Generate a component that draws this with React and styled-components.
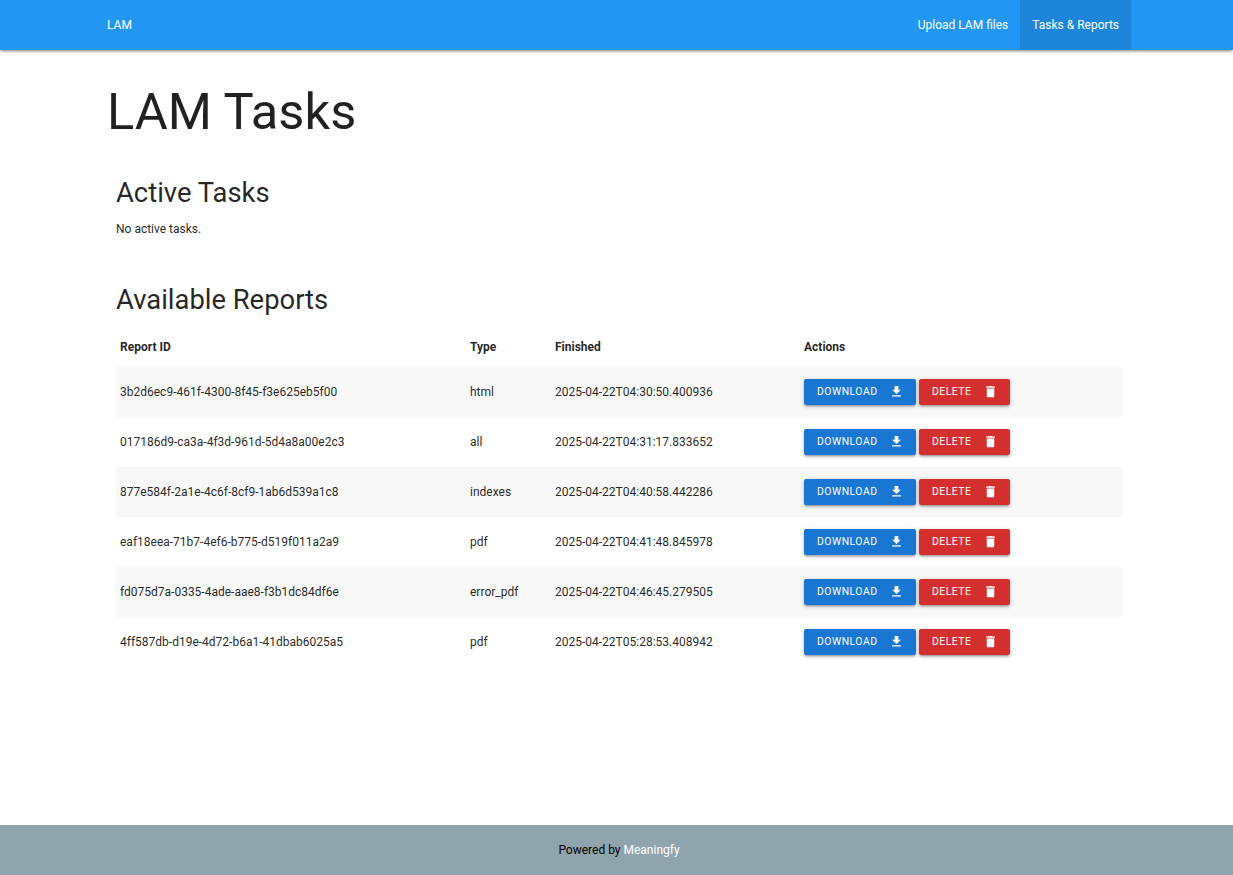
import React from 'react'
import styled, { createGlobalStyle } from 'styled-components'
import { MdFileDownload, MdDelete } from 'react-icons/md'

const reports = [
  { id: '3b2d6ec9-461f-4300-8f45-f3e625eb5f00', type: 'html', finished: '2025-04-22T04:30:50.400936' },
  { id: '017186d9-ca3a-4f3d-961d-5d4a8a00e2c3', type: 'all', finished: '2025-04-22T04:31:17.833652' },
  { id: '877e584f-2a1e-4c6f-8cf9-1ab6d539a1c8', type: 'indexes', finished: '2025-04-22T04:40:58.442286' },
  { id: 'eaf18eea-71b7-4ef6-b775-d519f011a2a9', type: 'pdf', finished: '2025-04-22T04:41:48.845978' },
  { id: 'fd075d7a-0335-4ade-aae8-f3b1dc84df6e', type: 'error_pdf', finished: '2025-04-22T04:46:45.279505' },
  { id: '4ff587db-d19e-4d72-b6a1-41dbab6025a5', type: 'pdf', finished: '2025-04-22T05:28:53.408942' },
]

export default function App() {
  return (
    <Page>
      <GlobalStyle />
      <Nav>
        <Brand href="#">LAM</Brand>
        <NavLinks>
          <NavLink href="#">Upload LAM files</NavLink>
          <NavLink href="#" $active>Tasks &amp; Reports</NavLink>
        </NavLinks>
      </Nav>
      <Main>
        <Title>LAM Tasks</Title>
        <Section>
          <Heading>Active Tasks</Heading>
          <Note>No active tasks.</Note>
        </Section>
        <Section>
          <Heading>Available Reports</Heading>
          <Table>
            <thead>
              <tr>
                <Th $width={350}>Report ID</Th>
                <Th $width={85}>Type</Th>
                <Th $width={249}>Finished</Th>
                <Th>Actions</Th>
              </tr>
            </thead>
            <tbody>
              {reports.map((r) => (
                <Row key={r.id}>
                  <Td>{r.id}</Td>
                  <Td>{r.type}</Td>
                  <Td>{r.finished}</Td>
                  <Td>
                    <Actions>
                      <Button $color="#1976d2" $width={112}>
                        Download <MdFileDownload size={15} />
                      </Button>
                      <Button $color="#d32f2f" $width={91}>
                        Delete <MdDelete size={15} />
                      </Button>
                    </Actions>
                  </Td>
                </Row>
              ))}
            </tbody>
          </Table>
        </Section>
      </Main>
      <Footer>
        Powered by&nbsp;<FooterLink href="#">Meaningfy</FooterLink>
      </Footer>
    </Page>
  )
}

const GlobalStyle = createGlobalStyle`
  * {
    box-sizing: border-box;
  }

  body {
    margin: 0;
    font-family: Roboto, sans-serif;
    color: rgba(0, 0, 0, 0.87);
  }
`

const Page = styled.div`
  min-height: 875px;
  display: flex;
  flex-direction: column;
  background: #fff;
`

const Nav = styled.nav`
  height: 50px;
  padding: 0 102px 0 107px;
  display: flex;
  align-items: center;
  justify-content: space-between;
  background: #2196f3;
  box-shadow: 0 2px 2px 0 rgba(0, 0, 0, 0.14), 0 3px 1px -2px rgba(0, 0, 0, 0.12), 0 1px 5px 0 rgba(0, 0, 0, 0.2);
`

const Brand = styled.a`
  padding-bottom: 1px;
  color: #fff;
  font-size: 12px;
  text-decoration: none;
`

const NavLinks = styled.div`
  display: flex;
  height: 100%;
`

const NavLink = styled.a`
  height: 100%;
  padding: 0 12px 1px;
  display: flex;
  align-items: center;
  color: #fff;
  font-size: 12px;
  text-decoration: none;
  background: ${(p) => (p.$active ? 'rgba(0, 0, 0, 0.1)' : 'transparent')};
`

const Main = styled.main`
  flex: 1;
  padding: 0 111px 0 107px;
`

const Title = styled.h1`
  margin: 30px 0 33px;
  font-size: 50.6px;
  font-weight: 400;
  line-height: 64px;
  color: rgba(0, 0, 0, 0.87);
`

const Section = styled.section`
  margin: 0 0 45px 9px;
`

const Heading = styled.h3`
  margin: 0 0 10px;
  font-size: 27.4px;
  font-weight: 400;
  line-height: 32px;
`

const Note = styled.p`
  margin: 0;
  font-size: 12px;
  line-height: 20px;
`

const Table = styled.table`
  width: 100%;
  border-collapse: collapse;
  table-layout: fixed;
  font-size: 12px;
`

const Th = styled.th`
  ${(p) => p.$width && `width: ${p.$width}px;`}
  height: 41px;
  padding: 0 4px 0;
  text-align: left;
  font-weight: 700;
`

const Row = styled.tr`
  height: 50px;

  &:nth-child(odd) {
    background: #f8f8f8;
  }
`

const Td = styled.td`
  padding: 0 4px;
`

const Actions = styled.div`
  display: flex;
  gap: 3px;
`

const Button = styled.button`
  width: ${(p) => p.$width}px;
  height: 26px;
  padding: 0 12.5px 1px 13px;
  display: flex;
  align-items: center;
  justify-content: space-between;
  border: none;
  border-radius: 2px;
  background: ${(p) => p.$color};
  color: #fff;
  font-family: Roboto, sans-serif;
  font-size: 10.4px;
  letter-spacing: 0.5px;
  text-transform: uppercase;
  box-shadow: 0 2px 2px 0 rgba(0, 0, 0, 0.14), 0 3px 1px -2px rgba(0, 0, 0, 0.12), 0 1px 5px 0 rgba(0, 0, 0, 0.2);
`

const Footer = styled.footer`
  height: 50px;
  padding: 0 0 1px 5px;
  display: flex;
  align-items: center;
  justify-content: center;
  background: #90a4ae;
  color: #000;
  font-size: 12px;
`

const FooterLink = styled.a`
  color: #fff;
  text-decoration: none;
`
